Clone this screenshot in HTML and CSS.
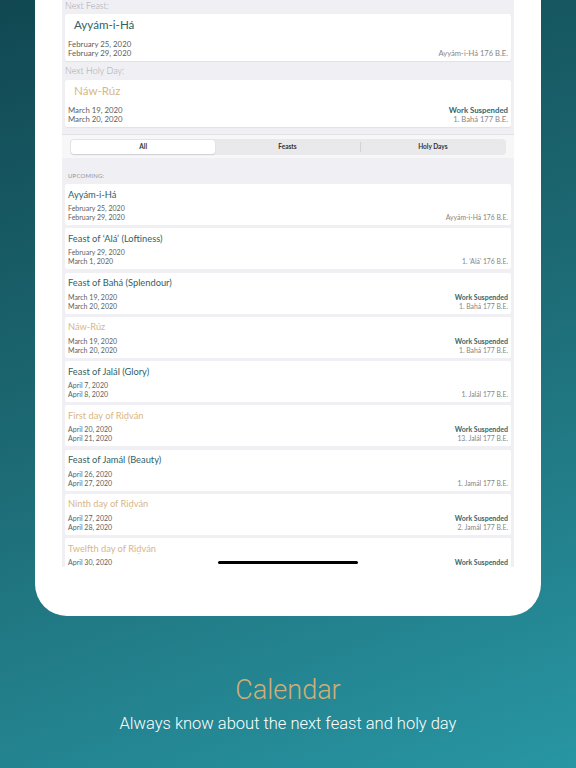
FILE: index.html
```html
<!DOCTYPE html>
<html>
<head>
<meta charset="utf-8">
<link rel="stylesheet" href="styles.css">
</head>
<body>
<div class="page">
  <div class="device">
    <div class="screen">
      <div class="hlabel">Next Feast:</div>
      <div class="hcard">
        <div class="htitle teal">Ayyám-i-Há</div>
        <div class="hbody">
          <div class="dates"><div>February 25, 2020</div><div>February 29, 2020</div></div>
          <div class="info"><div>Ayyám-i-Há 176 B.E.</div></div>
        </div>
      </div>
      <div class="hlabel second">Next Holy Day:</div>
      <div class="hcard">
        <div class="htitle tan">Náw-Rúz</div>
        <div class="hbody">
          <div class="dates"><div>March 19, 2020</div><div>March 20, 2020</div></div>
          <div class="info"><div class="ws">Work Suspended</div><div>1. Bahá 177 B.E.</div></div>
        </div>
      </div>
      <div class="segwrap">
        <div class="seg">
          <div class="segitem active">All</div>
          <div class="segitem">Feasts</div>
          <div class="segdiv"></div>
          <div class="segitem">Holy Days</div>
        </div>
      </div>
      <div class="section">UPCOMING:</div>
      <div class="list">
        <div class="card">
          <div class="title teal">Ayyám-i-Há</div>
          <div class="body"><div class="dates"><div>February 25, 2020</div><div>February 29, 2020</div></div><div class="info"><div>Ayyám-i-Há 176 B.E.</div></div></div>
        </div>
        <div class="card">
          <div class="title teal">Feast of ‘Alá’ (Loftiness)</div>
          <div class="body"><div class="dates"><div>February 29, 2020</div><div>March 1, 2020</div></div><div class="info"><div>1. ‘Alá’ 176 B.E.</div></div></div>
        </div>
        <div class="card">
          <div class="title teal">Feast of Bahá (Splendour)</div>
          <div class="body"><div class="dates"><div>March 19, 2020</div><div>March 20, 2020</div></div><div class="info"><div class="ws">Work Suspended</div><div>1. Bahá 177 B.E.</div></div></div>
        </div>
        <div class="card">
          <div class="title tan">Náw-Rúz</div>
          <div class="body"><div class="dates"><div>March 19, 2020</div><div>March 20, 2020</div></div><div class="info"><div class="ws">Work Suspended</div><div>1. Bahá 177 B.E.</div></div></div>
        </div>
        <div class="card">
          <div class="title teal">Feast of Jalál (Glory)</div>
          <div class="body"><div class="dates"><div>April 7, 2020</div><div>April 8, 2020</div></div><div class="info"><div>1. Jalál 177 B.E.</div></div></div>
        </div>
        <div class="card">
          <div class="title tan">First day of Riḍván</div>
          <div class="body"><div class="dates"><div>April 20, 2020</div><div>April 21, 2020</div></div><div class="info"><div class="ws">Work Suspended</div><div>13. Jalál 177 B.E.</div></div></div>
        </div>
        <div class="card">
          <div class="title teal">Feast of Jamál (Beauty)</div>
          <div class="body"><div class="dates"><div>April 26, 2020</div><div>April 27, 2020</div></div><div class="info"><div>1. Jamál 177 B.E.</div></div></div>
        </div>
        <div class="card">
          <div class="title tan">Ninth day of Riḍván</div>
          <div class="body"><div class="dates"><div>April 27, 2020</div><div>April 28, 2020</div></div><div class="info"><div class="ws">Work Suspended</div><div>2. Jamál 177 B.E.</div></div></div>
        </div>
        <div class="card">
          <div class="title tan">Twelfth day of Riḍván</div>
          <div class="body top"><div class="dates"><div>April 30, 2020</div></div><div class="info"><div class="ws">Work Suspended</div></div></div>
        </div>
      </div>
      <div class="homebar"></div>
    </div>
  </div>
  <div class="caption">
    <div class="capt-title">Calendar</div>
    <div class="capt-sub">Always know about the next feast and holy day</div>
  </div>
</div>
</body>
</html>
```
FILE: styles.css
```css
html, body {
  margin: 0;
  padding: 0;
}
body {
  width: 576px;
  height: 768px;
  overflow: hidden;
  background: linear-gradient(160deg, #114852 0%, #1c6872 45%, #2896a3 100%);
  font-family: "Lato", "Noto Sans", sans-serif;
}
.page {
  height: 768px;
}
.device {
  margin: 0 35px;
  height: 616px;
  background: #ffffff;
  border-radius: 0 0 32px 32px;
  padding: 0 27px;
  box-sizing: border-box;
}
.screen {
  position: relative;
  height: 567px;
  background: #efeff4;
  overflow: hidden;
}
.hlabel {
  height: 14px;
  line-height: 11px;
  font-size: 9px;
  color: #a6a6ab;
  padding-left: 3px;
  font-weight: 300;
}
.hlabel.second {
  height: 19px;
  line-height: 19px;
}
.hcard {
  margin: 0 3px;
  height: 47px;
  box-sizing: border-box;
  background: #fff;
  border-radius: 2px;
  padding: 3.5px 3px 3px 3px;
  box-shadow: 0 0.5px 1px rgba(0,0,0,0.06);
}
.htitle {
  font-size: 11.6px;
  line-height: 14px;
  padding-left: 6px;
}
.hbody {
  display: flex;
  justify-content: space-between;
  align-items: flex-end;
  margin-top: 8px;
  font-size: 7.8px;
  line-height: 9px;
}
.dates { color: #5e5e5e; }
.info { text-align: right; color: #858585; }
.ws { color: #36666c; font-weight: 700; }
.hbody .info div:not(.ws) { font-size: 7.6px; }
.teal { color: #2f6168; }
.tan { color: #d8b688; }
.segwrap {
  margin-top: 7px;
  border-top: 1px solid #e2e2e6;
  background: #f7f7f8;
  height: 24px;
  padding: 4px 8px 0 8px;
  box-sizing: border-box;
}
.seg {
  height: 16px;
  background: #e9e9ec;
  border-radius: 4px;
  display: flex;
  align-items: center;
  padding: 1px;
  box-sizing: border-box;
}
.segitem {
  flex: 1;
  height: 14px;
  line-height: 14px;
  text-align: center;
  font-size: 6.5px;
  font-weight: 700;
  color: #333;
  border-radius: 3px;
}
.segitem.active {
  background: #fff;
  box-shadow: 0 0.5px 1.5px rgba(0,0,0,0.12);
}
.segdiv {
  width: 1px;
  height: 10px;
  background: #d2d2d6;
}
.section {
  height: 26px;
  box-sizing: border-box;
  padding: 14px 0 0 6px;
  font-size: 6px;
  line-height: 8px;
  color: #939398;
  letter-spacing: 0.2px;
}
.list {
  display: flex;
  flex-direction: column;
  gap: 3.25px;
}
.card {
  flex: none;
  margin: 0 3px;
  height: 41px;
  box-sizing: border-box;
  background: #fff;
  border-radius: 2px;
  padding: 3.5px 3px 3px 3px;
}
.title {
  font-size: 9.3px;
  line-height: 14px;
}
.body {
  display: flex;
  justify-content: space-between;
  align-items: flex-end;
  margin-top: 2.5px;
  font-size: 7px;
  line-height: 9px;
}
.body.top {
  align-items: flex-start;
}
.body .info div:not(.ws) { font-size: 6.8px; }
.homebar {
  position: absolute;
  left: 156px;
  top: 561px;
  width: 140px;
  height: 3px;
  border-radius: 2px;
  background: #000;
}
.caption {
  display: flex;
  flex-direction: column;
  align-items: center;
  font-family: "Roboto", sans-serif;
  font-weight: 300;
  padding-top: 56px;
}
.capt-title {
  font-size: 27px;
  line-height: 36px;
  color: #d2ad79;
}
.capt-sub {
  margin-top: 2px;
  font-size: 16.5px;
  line-height: 28px;
  color: #ffffff;
}
```
